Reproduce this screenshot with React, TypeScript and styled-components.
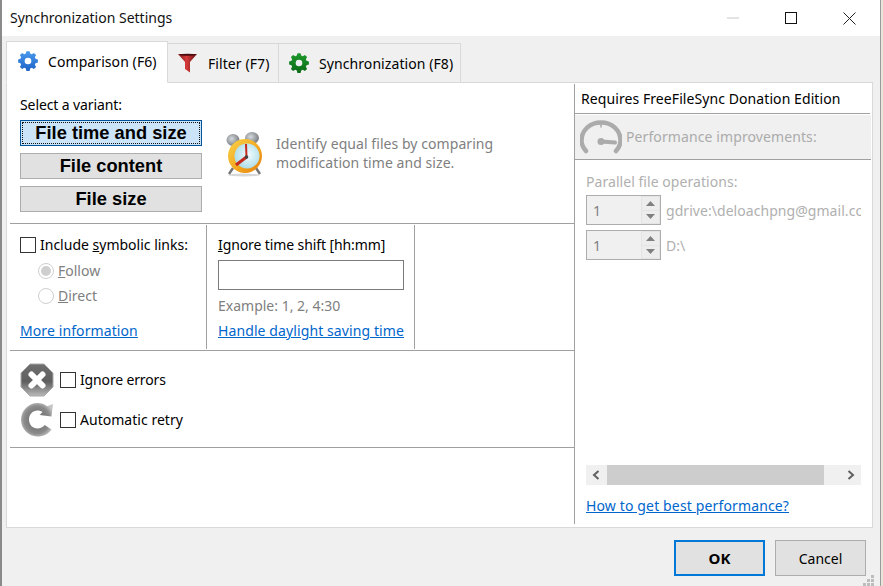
import React from "react";
import styled, { createGlobalStyle } from "styled-components";

const Global = createGlobalStyle`
  html, body { margin: 0; padding: 0; background: #fff; }
  body { font-family: "Noto Sans", "Open Sans", sans-serif; font-size: 14px; color: #000; }
  * { box-sizing: border-box; }
`;

const Screen = styled.div`
  width: 883px; height: 586px; display: flex; overflow: hidden; background: #fff;
`;
const Win = styled.div`
  width: 881px; height: 586px; display: flex; flex-direction: column;
  border-left: 2px solid #8a8a8a; border-right: 1px solid #9a9a9a; background: #f0f0f0;
`;
const Edge = styled.div`
  width: 2px; background: #e9e4da;
`;
const TitleBar = styled.div`
  height: 36px; background: #fff; display: flex; align-items: center; padding: 0 1px 0 8px; flex: none;
`;
const Title = styled.div`
  flex: 1; font-size: 14px; color: #111; padding-bottom: 2px;
`;
const WinBtn = styled.div`
  width: 58.5px; height: 36px; display: flex; align-items: center; justify-content: center;
`;
const Body = styled.div`
  flex: 1; display: flex; flex-direction: column; padding: 0 6px 0 4px; position: relative;
`;
const TabRow = styled.div`
  height: 47px; display: flex; align-items: flex-end; flex: none; position: relative; z-index: 1; margin-bottom: -1px;
`;
const Tab = styled.div<{ $active?: boolean; $w: number }>`
  width: ${(p) => p.$w}px; height: ${(p) => (p.$active ? 42 : 40)}px;
  display: flex; align-items: center; gap: 10px; padding-left: ${(p) => (p.$active ? 11 : 10)}px;
  background: ${(p) => (p.$active ? "#fff" : "#f0f0f0")};
  border: 1px solid #d9d9d9; border-left-width: ${(p) => (p.$active ? 1 : 0)}px;
  border-bottom-color: ${(p) => (p.$active ? "#fff" : "#d9d9d9")};
  font-size: 14px; letter-spacing: 0.08px; padding-bottom: ${(p) => (p.$active ? 2 : 0)}px;
`;
const Panel = styled.div`
  width: 867px; height: 446px; background: #fff; border: 1px solid #d9d9d9; display: flex; flex: none;
`;
const Left = styled.div`
  width: 568px; height: 440px; margin-top: 1px; padding-left: 3px; border-right: 1px solid #a0a0a0; flex: none;
  display: flex; flex-direction: column;
`;
const VariantSection = styled.div`
  height: 140px; padding: 11px 0 0 10px; border-bottom: 1px solid #a0a0a0; flex: none;
`;
const SmallLabel = styled.div`
  font-size: 14px; line-height: 20px; letter-spacing: -0.1px;
`;
const ShiftLabel = styled(SmallLabel)`
  margin-top: 10px;
`;
const VariantRow = styled.div`
  display: flex; margin-top: 5px;
`;
const VariantCol = styled.div`
  width: 182px; display: flex; flex-direction: column; gap: 7px; flex: none;
`;
const VariantBtn = styled.div<{ $sel?: boolean }>`
  height: 26px; display: flex; align-items: center; justify-content: center;
  font-family: "Liberation Sans", Arial, sans-serif; font-weight: 700; font-size: 18.3px;
  border: 1px solid ${(p) => (p.$sel ? "#005499" : "#adadad")};
  background: ${(p) => (p.$sel ? "#cce4f7" : "#e1e1e1")};
  outline: ${(p) => (p.$sel ? "1px dotted #111" : "none")};
  outline-offset: -3px;
`;
const Desc = styled.div`
  display: flex; align-items: flex-start; margin: 11px 0 0 22px;
`;
const DescText = styled.div`
  margin: 3px 0 0 10px; font-size: 14px; line-height: 19px; color: #808080; width: 262px; letter-spacing: 0.06px;
`;
const OptionSection = styled.div`
  height: 127px; display: flex; border-bottom: 1px solid #a0a0a0; flex: none;
`;
const OptCol = styled.div<{ $w: number; $pl: number }>`
  width: ${(p) => p.$w}px; height: 125px; margin-top: 1px; padding-left: ${(p) => p.$pl}px; flex: none;
  display: flex; flex-direction: column; position: relative;
`;
const Divider = styled.div`
  width: 1px; height: 124px; margin-top: 1px; background: #a0a0a0; flex: none;
`;
const CheckRow = styled.label`
  display: flex; align-items: center; gap: 4px; font-size: 14px; line-height: 20px; margin-top: 10px; letter-spacing: 0;
`;
const ErrorLabel = styled.span<{ $ls: number }>`
  font-size: 14px; line-height: 20px; margin-left: -2px; letter-spacing: ${(p) => p.$ls}px;
`;
const Check = styled.span`
  width: 16px; height: 16px; border: 1px solid #333; background: #fff; display: inline-block; flex: none;
`;
const RadioGroup = styled.div`
  margin-top: 3px;
`;
const RadioRow = styled.div`
  display: flex; align-items: center; gap: 4px; color: #808080; font-size: 14px; line-height: 25px; margin-left: 18px; height: 25px;
`;
const Radio = styled.span<{ $on?: boolean }>`
  width: 16px; height: 16px; border-radius: 50%; border: 1px solid #cfcfcf; background: #fff;
  display: flex; align-items: center; justify-content: center; flex: none;
  &::after {
    content: ""; width: 10px; height: 10px; border-radius: 50%;
    background: ${(p) => (p.$on ? "#cfcfcf" : "transparent")};
  }
`;
const Link = styled.a`
  color: #0066cc; text-decoration: underline; font-size: 14px; line-height: 20px; letter-spacing: 0.1px; white-space: nowrap;
`;
const BottomLink = styled(Link)`
  position: absolute; bottom: 9px;
`;
const TimeInput = styled.div`
  width: 186px; height: 30px; border: 1px solid #7a7a7a; background: #fff; margin-top: 5px; flex: none;
`;
const Hint = styled.div`
  color: #808080; font-size: 14px; line-height: 20px; margin-top: 6px;
`;
const ErrorSection = styled.div`
  height: 97px; padding: 11px 0 0 10px; border-bottom: 1px solid #a0a0a0; flex: none;
  display: flex; flex-direction: column; gap: 5px;
`;
const ErrorRow = styled.div`
  display: flex; align-items: center; height: 35px; gap: 6px;
`;
const Right = styled.div`
  flex: 1; display: flex; flex-direction: column; position: relative; min-width: 0; padding-top: 6px;
`;
const Requires = styled.div`
  padding-left: 6px; height: 25px; line-height: 19px; font-size: 14px; letter-spacing: 0.08px;
  border-bottom: 1px solid #a0a0a0; margin: 0 2px 0 0;
`;
const PerfBand = styled.div`
  margin-top: 1px; height: 45px; background: #f0f0f0; display: flex; align-items: center; gap: 4px; padding: 0 0 1px 5px;
  border-bottom: 1px solid #a0a0a0; color: #ababab; font-size: 14px; letter-spacing: 0.1px; margin-right: 1px;
`;
const Parallel = styled.div`
  padding: 12px 0 0 11px; color: #b0b0b0; font-size: 14px; line-height: 20px; letter-spacing: 0.05px;
`;
const SpinList = styled.div`
  display: flex; flex-direction: column; gap: 5px; margin: 3px 0 0 11px;
`;
const SpinRow = styled.div`
  display: flex; align-items: center; width: 275px; overflow: hidden; white-space: nowrap; color: #b0b0b0; gap: 5px; letter-spacing: 0.05px;
`;
const Spin = styled.div`
  width: 75px; height: 30px; flex: none; border: 1px solid #adadad; background: #f0f0f0; display: flex; color: #808080;
  padding-left: 6px; align-items: center; position: relative;
`;
const SpinBtns = styled.div`
  position: absolute; right: 0; top: 0; bottom: 0; width: 19px; display: flex; flex-direction: column; gap: 1px; padding: 1px; background: #e4e4e4;
`;
const SpinBtn = styled.div`
  flex: 1; background: #ededed; display: flex; align-items: center; justify-content: center;
`;
const ScrollWrap = styled.div`
  position: absolute; left: 11px; bottom: 42px; width: 275px; height: 20px; background: #f0f0f0; display: flex; align-items: center; justify-content: space-between;
`;
const Thumb = styled.div`
  position: absolute; left: 21px; width: 217px; top: 0; bottom: 0; background: #cdcdcd;
`;
const ArrowBox = styled.div`
  width: 20px; height: 20px; display: flex; align-items: center; justify-content: center;
`;
const PerfLink = styled(Link)`
  position: absolute; left: 11px; bottom: 11px; letter-spacing: 0.14px;
`;
const Footer = styled.div`
  flex: 1; display: flex; justify-content: flex-end; gap: 10px; padding: 12px 8px 0 0; position: relative;
`;
const FootBtn = styled.div<{ $def?: boolean }>`
  width: 91px; height: 36px; display: flex; align-items: center; justify-content: center;
  background: #e1e1e1; font-size: ${(p) => (p.$def ? 15 : 14)}px;
  font-weight: ${(p) => (p.$def ? 700 : 400)};
  border: ${(p) => (p.$def ? "2px solid #0078d7" : "1px solid #adadad")};
`;
const Grip = styled.svg`
  position: absolute; right: 0; bottom: 0;
`;
const SoftIcon = styled.span`
  display: flex; flex: none; filter: blur(0.35px);
`;

const gearPath = (() => {
  const teeth = 8;
  const pts: string[] = [];
  const polar = (r: number, a: number) =>
    `${(12 + r * Math.cos(a)).toFixed(2)} ${(12 + r * Math.sin(a)).toFixed(2)}`;
  for (let i = 0; i < teeth; i++) {
    const a = (i / teeth) * Math.PI * 2 - Math.PI / 2;
    const step = (Math.PI * 2) / teeth;
    pts.push(polar(9.4, a - step * 0.36), polar(12, a - step * 0.2), polar(12, a + step * 0.2), polar(9.4, a + step * 0.36));
  }
  return `M${pts.join("L")}zM12 8a4 4 0 1 0 0 8 4 4 0 0 0 0-8z`;
})();

const Gear = ({ c, d, id }: { c: string; d: string; id: string }) => (
  <SoftIcon>
    <svg width="20" height="20" viewBox="0 0 24 24">
      <defs>
        <linearGradient id={id} x1="0" y1="0" x2="0" y2="1">
          <stop offset="0" stopColor={c} />
          <stop offset="1" stopColor={d} />
        </linearGradient>
      </defs>
      <path fill={`url(#${id})`} fillRule="evenodd" d={gearPath} />
    </svg>
  </SoftIcon>
);

const Funnel = () => (
  <SoftIcon>
    <svg width="20" height="20" viewBox="0 0 20 20">
      <defs>
        <linearGradient id="fn" x1="0" y1="0" x2="1" y2="0">
          <stop offset="0" stopColor="#7d1616" />
          <stop offset="0.45" stopColor="#d83a3a" />
          <stop offset="1" stopColor="#5e0f0f" />
        </linearGradient>
      </defs>
      <path fill="url(#fn)" d="M0 1h19l-7 8v10.500l-5-3.500V9z" />
      <ellipse cx="9.500" cy="1.800" rx="8" ry="1" fill="#4a0c0c" />
    </svg>
  </SoftIcon>
);

const Clock = () => (
  <SoftIcon>
    <svg width="42" height="46" viewBox="0 0 42 46">
      <defs>
        <radialGradient id="bell" cx="0.4" cy="0.4" r="0.7">
          <stop offset="0" stopColor="#d5dade" />
          <stop offset="1" stopColor="#6c7074" />
        </radialGradient>
        <linearGradient id="rim" x1="0" y1="0" x2="1" y2="1">
          <stop offset="0" stopColor="#f9d24a" />
          <stop offset="0.6" stopColor="#f2a51c" />
          <stop offset="1" stopColor="#e27d10" />
        </linearGradient>
        <radialGradient id="face" cx="0.55" cy="0.45" r="0.6">
          <stop offset="0" stopColor="#f2fbfd" />
          <stop offset="1" stopColor="#a8dbe8" />
        </radialGradient>
      </defs>
      <ellipse cx="20" cy="44" rx="16" ry="1.500" fill="#d8d8d8" />
      <path d="M9 37l-4 6M32 37l4 6" stroke="#777" strokeWidth="2.500" />
      <ellipse cx="9" cy="9" rx="6.500" ry="6" fill="url(#bell)" />
      <ellipse cx="28" cy="7" rx="7" ry="6" fill="url(#bell)" />
      <circle cx="21" cy="25" r="17" fill="url(#rim)" />
      <circle cx="23" cy="25" r="12.500" fill="url(#face)" />
      <path d="M22.500 26L22 13" stroke="#c5281c" strokeWidth="2" />
      <path d="M22.500 26L12 34" stroke="#c5281c" strokeWidth="3" />
      <circle cx="22.500" cy="26" r="1.800" fill="#444" />
    </svg>
  </SoftIcon>
);

const Stop = () => (
  <SoftIcon>
    <svg width="34" height="34" viewBox="0 0 34 34">
      <defs>
        <linearGradient id="st" x1="0" y1="0" x2="0" y2="1">
          <stop offset="0" stopColor="#6f6f6f" />
          <stop offset="0.55" stopColor="#5f5f5f" />
          <stop offset="1" stopColor="#b9b9b9" />
        </linearGradient>
      </defs>
      <path fill="url(#st)" stroke="#a8a8a8" d="M10 1h14l9 9v14l-9 9H10l-9-9V10z" />
      <path stroke="#fff" strokeWidth="6" strokeLinecap="round" d="M11.500 11.500l11 11M22.500 11.500l-11 11" />
    </svg>
  </SoftIcon>
);

const Retry = () => (
  <SoftIcon>
    <svg width="34" height="35" viewBox="0 0 34 35">
      <defs>
        <radialGradient id="rt" cx="0.5" cy="0.5" r="0.55">
          <stop offset="0" stopColor="#f5f5f5" />
          <stop offset="0.4" stopColor="#777" />
          <stop offset="0.75" stopColor="#8c8c8c" />
          <stop offset="1" stopColor="#c4c4c4" />
        </radialGradient>
      </defs>
      <path
        fill="url(#rt)"
        d="M17.500 1c3.800 0 7 1.200 9.500 3.200L33 2l-1.500 12.500L19.500 13l3-3c-1.500-1-3.200-1.500-5-1.500-5 0-8.500 4-8.500 9s3.500 9 8.500 9c3 0 5.500-1.300 7.200-3.500l6.800 4.500C28.500 32 23.500 34.500 17.500 34.500 8.500 34.500 1 27 1 17.800S8.500 1 17.500 1z"
      />
    </svg>
  </SoftIcon>
);

const Gauge = () => (
  <svg width="42" height="34" viewBox="0 0 42 34">
    <g fill="none" stroke="#ababab" strokeLinecap="round">
      <path d="M6 31C2.500 27 1.500 24 1.500 20.500 1.500 10 10 2.500 21 2.500S40.500 10 40.500 20.500c0 3.500-1 6.500-4.500 10.500" strokeWidth="4.500" />
      <path d="M21 3v4" strokeWidth="1.500" />
      <path d="M21 21.500l14 1" strokeWidth="4" />
    </g>
    <circle cx="21" cy="21.500" r="3.500" fill="#ababab" />
  </svg>
);

const Tri = ({ up }: { up?: boolean }) => (
  <svg width="9" height="5" viewBox="0 0 9 5">
    <path fill="#808080" d={up ? "M4.500 0L9 5H0z" : "M0 0h9L4.500 5z"} />
  </svg>
);

const Chevron = ({ left }: { left?: boolean }) => (
  <svg width="8" height="10" viewBox="0 0 8 10">
    <path fill="none" stroke="#606060" strokeWidth="2" d={left ? "M6.500 1L2 5l4.500 4" : "M1.500 1L6 5 1.500 9"} />
  </svg>
);

const Spinner = () => (
  <Spin>
    1
    <SpinBtns>
      <SpinBtn><Tri up /></SpinBtn>
      <SpinBtn><Tri /></SpinBtn>
    </SpinBtns>
  </Spin>
);

export default function App() {
  return (
    <Screen>
      <Global />
      <Win>
        <TitleBar>
          <Title>Synchronization Settings</Title>
          <WinBtn>
            <svg width="12" height="2" viewBox="0 0 12 2"><path d="M0 1h12" stroke="#c8c8c8" /></svg>
          </WinBtn>
          <WinBtn>
            <svg width="12" height="12" viewBox="0 0 12 12"><rect x="0.500" y="0.500" width="11" height="11" fill="none" stroke="#111" /></svg>
          </WinBtn>
          <WinBtn>
            <svg width="13" height="13" viewBox="0 0 13 13"><path d="M.5.5l12 12M12.500.5l-12 12" stroke="#222" /></svg>
          </WinBtn>
        </TitleBar>
        <Body>
          <TabRow>
            <Tab $active $w={162}><Gear c="#4a9bf0" d="#1f63c6" id="g1" />Comparison (F6)</Tab>
            <Tab $w={111}><Funnel />Filter (F7)</Tab>
            <Tab $w={182}><Gear c="#1f9a2c" d="#0b6a16" id="g2" />Synchronization (F8)</Tab>
          </TabRow>
          <Panel>
            <Left>
              <VariantSection>
                <SmallLabel>Select a variant:</SmallLabel>
                <VariantRow>
                  <VariantCol>
                    <VariantBtn $sel>File time and size</VariantBtn>
                    <VariantBtn>File content</VariantBtn>
                    <VariantBtn>File size</VariantBtn>
                  </VariantCol>
                  <Desc>
                    <Clock />
                    <DescText>Identify equal files by comparing modification time and size.</DescText>
                  </Desc>
                </VariantRow>
              </VariantSection>
              <OptionSection>
                <OptCol $w={196} $pl={10}>
                  <CheckRow>
                    <Check />
                    <span>Include <u>s</u>ymbolic links:</span>
                  </CheckRow>
                  <RadioGroup>
                    <RadioRow><Radio $on /><span><u>F</u>ollow</span></RadioRow>
                    <RadioRow><Radio /><span><u>D</u>irect</span></RadioRow>
                  </RadioGroup>
                  <BottomLink>More information</BottomLink>
                </OptCol>
                <Divider />
                <OptCol $w={207} $pl={11}>
                  <ShiftLabel><u>I</u>gnore time shift [hh:mm]</ShiftLabel>
                  <TimeInput />
                  <Hint>Example: 1, 2, 4:30</Hint>
                  <BottomLink>Handle daylight saving time</BottomLink>
                </OptCol>
                <Divider />
              </OptionSection>
              <ErrorSection>
                <ErrorRow><Stop /><Check /><ErrorLabel $ls={-0.15}>Ignore errors</ErrorLabel></ErrorRow>
                <ErrorRow><Retry /><Check /><ErrorLabel $ls={0.03}>Automatic retry</ErrorLabel></ErrorRow>
              </ErrorSection>
            </Left>
            <Right>
              <Requires>Requires FreeFileSync Donation Edition</Requires>
              <PerfBand><Gauge />Performance improvements:</PerfBand>
              <Parallel>Parallel file operations:</Parallel>
              <SpinList>
                <SpinRow><Spinner />gdrive:\deloachpng@gmail.com</SpinRow>
                <SpinRow><Spinner />D:\</SpinRow>
              </SpinList>
              <ScrollWrap>
                <Thumb />
                <ArrowBox><Chevron left /></ArrowBox>
                <ArrowBox><Chevron /></ArrowBox>
              </ScrollWrap>
              <PerfLink>How to get best performance?</PerfLink>
            </Right>
          </Panel>
          <Footer>
            <FootBtn $def>OK</FootBtn>
            <FootBtn>Cancel</FootBtn>
            <Grip width="11" height="11" viewBox="0 0 11 11">
              <path fill="#bdbdbd" d="M8 0h3v3H8zM4 4h3v3H4zM8 4h3v3H8zM0 8h3v3H0zM4 8h3v3H4zM8 8h3v3H8z" />
            </Grip>
          </Footer>
        </Body>
      </Win>
      <Edge />
    </Screen>
  );
}
